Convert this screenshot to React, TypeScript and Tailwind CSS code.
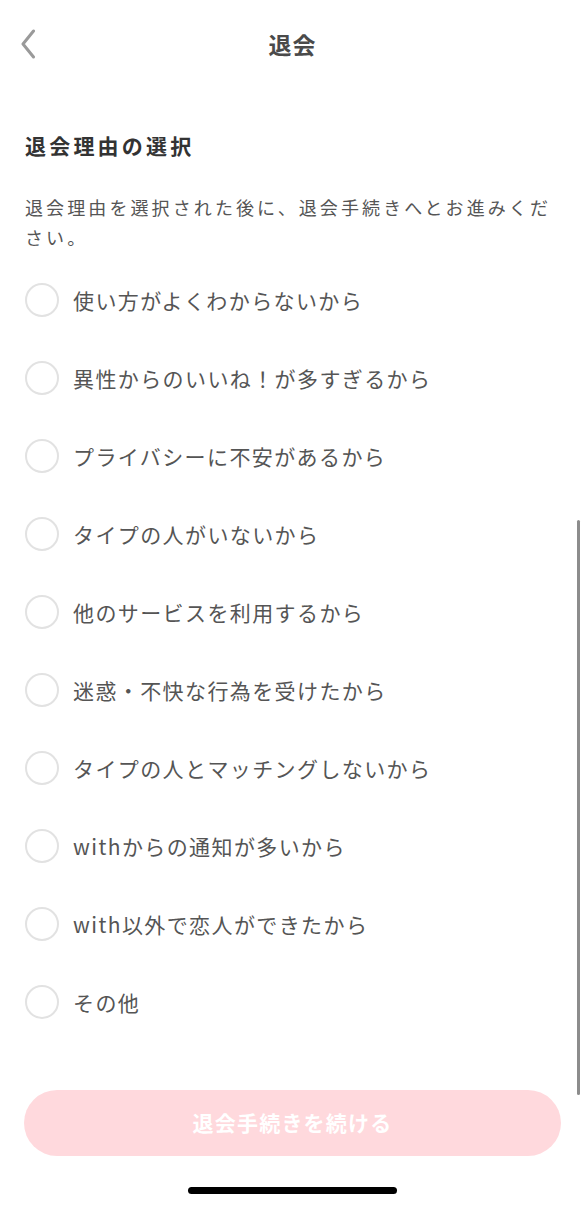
const reasons = [
  "使い方がよくわからないから",
  "異性からのいいね！が多すぎるから",
  "プライバシーに不安があるから",
  "タイプの人がいないから",
  "他のサービスを利用するから",
  "迷惑・不快な行為を受けたから",
  "タイプの人とマッチングしないから",
  "withからの通知が多いから",
  "with以外で恋人ができたから",
  "その他",
];

function BackIcon() {
  return (
    <svg width="16" height="30" viewBox="0 0 16 30" fill="none">
      <path
        d="M12.5 2 L2 15 L12.5 28"
        stroke="#9a9a9a"
        strokeWidth="3"
        strokeLinecap="round"
        strokeLinejoin="round"
      />
    </svg>
  );
}

function ReasonRow({ label }: { label: string }) {
  return (
    <div className="h-[78px] flex items-center">
      <div className="w-[34px] h-[34px] rounded-full border-[2.5px] border-[#e2e2e2] flex-shrink-0" />
      <span className="ml-[14px] text-[21px] leading-[30px] tracking-[1.4px] text-[#555]">
        {label}
      </span>
    </div>
  );
}

export default function App() {
  return (
    <div
      className="relative w-[585px] h-[1206px] bg-white overflow-hidden flex flex-col"
      style={{ fontFamily: '"Noto Sans CJK JP", "Noto Sans", sans-serif' }}
    >
      {/* Header */}
      <div className="h-[88px] grid grid-cols-[80px_1fr_80px] items-center">
        <div className="pl-[21px] flex items-center">
          <BackIcon />
        </div>
        <h1 className="text-center text-[23px] font-bold tracking-[1px] text-[#4a4a4a]">
          退会
        </h1>
        <div />
      </div>

      <div className="px-[25px]">
        <h2 className="mt-[42px] text-[21px] leading-[30px] font-bold tracking-[3.2px] text-[#333]">
          退会理由の選択
        </h2>
        <p className="mt-[32px] text-[18px] leading-[30px] tracking-[3.1px] text-[#555]">
          退会理由を選択された後に、退会手続きへとお進みください。
        </p>

        {/* Reasons */}
        <div className="mt-[9px] flex flex-col">
          {reasons.map((r) => (
            <ReasonRow key={r} label={r} />
          ))}
        </div>
      </div>

      {/* Continue button (disabled) */}
      <div className="mt-[49px] mx-[24px] h-[66px] rounded-full bg-[#ffd9dd] flex items-center justify-center">
        <span className="text-white text-[21px] font-bold tracking-[1.2px]">
          退会手続きを続ける
        </span>
      </div>

      {/* Home indicator */}
      <div className="mt-[31px] mx-auto w-[209px] h-[7px] rounded-full bg-black" />

      {/* Scroll indicator */}
      <div className="absolute right-[5px] top-[520px] w-[3px] h-[575px] rounded-full bg-[#8c8c8c]" />
    </div>
  );
}
